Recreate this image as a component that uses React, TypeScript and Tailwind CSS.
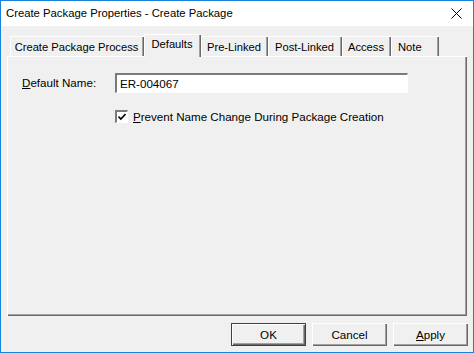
import React from "react";

const tabs = [
  { label: "Create Package Process", w: 134 },
  { label: "Defaults", w: 57, active: true },
  { label: "Pre-Linked", w: 67 },
  { label: "Post-Linked", w: 74 },
  { label: "Access", w: 49 },
  { label: "Note", w: 48, note: true },
];

function Btn({ children, def }: { children: React.ReactNode; def?: boolean }) {
  return (
    <div
      className={
        "w-[75px] h-[23px] flex items-center justify-center bg-[#f0f0f0] " +
        (def
          ? "border border-[#404040] shadow-[inset_1px_1px_0_#ffffff,inset_-1px_-1px_0_#696969,inset_-2px_-2px_0_#a0a0a0]"
          : "shadow-[inset_1px_1px_0_#ffffff,inset_-1px_-1px_0_#696969,inset_-2px_-2px_0_#a0a0a0]")
      }
    >
      <span className="leading-none">{children}</span>
    </div>
  );
}

export default function App() {
  return (
    <div
      className="w-[474px] h-[353px] border border-[#1883d7] bg-[#f0f0f0] flex flex-col text-[11.6px] text-black overflow-hidden"
      style={{ fontFamily: '"Liberation Sans", Arial, sans-serif' }}
    >
      <div className="h-[25px] bg-white flex items-center justify-between pl-[5px] pr-[10px] shrink-0">
        <span className="text-[11.3px]">Create Package Properties - Create Package</span>
        <svg width="11" height="11" viewBox="0 0 11 11" className="mr-[1px]">
          <path d="M0.5 0.5 L10.5 10.5 M10.5 0.5 L0.5 10.5" stroke="#000" strokeWidth="1" />
        </svg>
      </div>
      <div className="flex-1 flex flex-col pl-[6px] pr-[5px] pt-[8px]">
        <div className="flex items-end pl-[3px] h-[22px] relative z-10 text-[11.2px]">
          {tabs.map((t) =>
            t.active ? (
              <div
                key={t.label}
                style={{ width: t.w }}
                className="h-[23px] -mb-[1px] bg-[#f0f0f0] border-t border-l border-white shadow-[inset_-1px_0_0_#696969,inset_-2px_0_0_#a0a0a0] flex justify-center pt-[1px] pr-[2px]"
              >
                {t.label}
              </div>
            ) : (
              <div
                key={t.label}
                style={{ width: t.w }}
                className={
                  "h-[20px] bg-[#f0f0f0] border-t border-l border-white shadow-[inset_-1px_0_0_#696969,inset_-2px_0_0_#a0a0a0] flex pt-[2px] " +
                  (t.note ? "justify-start pl-[6px]" : "justify-center pr-[2px]")
                }
              >
                {t.label}
              </div>
            )
          )}
        </div>
        <div className="w-[460px] h-[260px] border-t border-l border-white shadow-[inset_-1px_-1px_0_#696969,inset_-2px_-2px_0_#a0a0a0] relative">
          <div className="flex items-center mt-[16px] ml-[14px]">
            <span className="w-[93px]">
              <span className="underline">D</span>efault Name:
            </span>
            <div className="w-[293px] h-[20px] bg-white border-t-2 border-l-2 border-t-[#7a7a7a] border-l-[#7a7a7a] border-b border-r border-b-white border-r-white flex items-center pl-[3px]">
              ER-004067
            </div>
          </div>
          <div className="flex items-center mt-[15px] ml-[107px]">
            <div className="w-[13px] h-[13px] bg-white border-t-2 border-l-2 border-t-[#7a7a7a] border-l-[#7a7a7a] border-b border-r border-b-white border-r-white flex items-center justify-center">
              <svg width="8" height="8" viewBox="0 0 8 8">
                <path d="M0.5 3.5 L2.8 6 L7.5 1" stroke="#000" strokeWidth="1.6" fill="none" />
              </svg>
            </div>
            <span className="ml-[5px]">
              <span className="underline">P</span>revent Name Change During Package Creation
            </span>
          </div>
        </div>
        <div className="flex justify-end gap-[6px] mt-[7px]">
          <Btn def>OK</Btn>
          <Btn>Cancel</Btn>
          <Btn>
            <span className="underline">A</span>pply
          </Btn>
        </div>
      </div>
    </div>
  );
}
